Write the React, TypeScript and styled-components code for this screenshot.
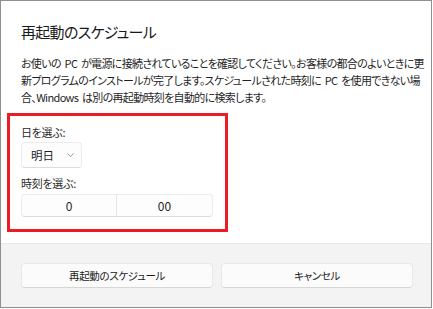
import React from 'react'
import styled, { createGlobalStyle } from 'styled-components'

const GlobalStyle = createGlobalStyle`
  html, body {
    margin: 0;
    padding: 0;
    background: #ffffff;
  }
  body {
    font-family: "Noto Sans CJK JP", "Noto Sans", sans-serif;
    font-feature-settings: "palt";
    color: #1b1b1b;
  }
`

const Window = styled.div`
  width: 432px;
  height: 308px;
  box-sizing: border-box;
  border: 1px solid #8f8f8f;
  background: #ffffff;
  display: flex;
  flex-direction: column;
`

const Content = styled.div`
  flex: 1;
  padding: 19px 20px 0 20px;
  display: flex;
  flex-direction: column;
`

const Title = styled.h1`
  margin: 0;
  font-size: 15px;
  letter-spacing: -0.7px;
  line-height: 24px;
  font-weight: 400;
  color: #1a1a1a;
  white-space: nowrap;
`

const Body = styled.p`
  margin: 11px 0 0 0;
  font-size: 11px;
  letter-spacing: -0.68px;
  word-spacing: 2px;
  line-height: 17px;
  color: #1f1f1f;
  white-space: nowrap;
`

const Highlight = styled.section`
  margin: 7px 0 0 -14px;
  width: 221px;
  height: 119px;
  box-sizing: border-box;
  border: 3px solid #ed1c24;
  padding: 8px 0 0 11px;
  display: flex;
  flex-direction: column;
  align-items: flex-start;
`

const Label = styled.div<{ $gap?: number }>`
  font-size: 11px;
  letter-spacing: -0.3px;
  line-height: 17px;
  color: #2b2b2b;
  margin-top: ${p => p.$gap ?? 0}px;
`

const Dropdown = styled.div`
  margin-top: 1px;
  width: 61px;
  height: 26px;
  box-sizing: border-box;
  border: 1px solid #ececec;
  border-bottom-color: #dcdcdc;
  border-radius: 4px;
  background: #fdfdfd;
  display: flex;
  align-items: center;
  padding: 0 0 0 9px;
  gap: 13px;
  font-size: 11.5px;
  color: #1f1f1f;
`

const TimePicker = styled.div`
  margin-top: 2px;
  width: 192px;
  height: 23px;
  box-sizing: border-box;
  border: 1px solid #ececec;
  border-bottom-color: #dcdcdc;
  border-radius: 4px;
  background: #fdfdfd;
  display: grid;
  grid-template-columns: 1fr 1fr;
`

const TimeCell = styled.div<{ $first?: boolean }>`
  display: flex;
  align-items: center;
  justify-content: center;
  font-size: 12px;
  color: #1f1f1f;
  border-right: ${p => (p.$first ? '1px solid #e6e6e6' : 'none')};
`

const Footer = styled.div`
  height: 64px;
  box-sizing: border-box;
  background: #f3f3f3;
  border-top: 1px solid #e8e8e8;
  padding: 19px 19px 0 20px;
  display: grid;
  grid-template-columns: 192px 192px;
  column-gap: 8px;
  align-items: start;
`

const Button = styled.button`
  height: 25px;
  box-sizing: border-box;
  border: 1px solid #e8e8e8;
  border-bottom-color: #d6d6d6;
  border-radius: 4px;
  background: #fbfbfb;
  font-family: inherit;
  font-feature-settings: "palt";
  font-size: 10.5px;
  letter-spacing: -0.35px;
  color: #1b1b1b;
  padding: 0;
  cursor: pointer;
`

const Chevron = () => (
  <svg width="7" height="4" viewBox="0 0 7 4">
    <path d="M0.5 0.5 L3.5 3.5 L6.5 0.5" fill="none" stroke="#7a7a7a" strokeWidth="0.8" />
  </svg>
)

export default function App() {
  return (
    <>
      <GlobalStyle />
      <Window>
        <Content>
          <Title>再起動のスケジュール</Title>
          <Body>
            お使いの PC が電源に接続されていることを確認してください。お客様の都合のよいときに更
            <br />
            新プログラムのインストールが完了します。スケジュールされた時刻に PC を使用できない場
            <br />
            合、Windows は別の再起動時刻を自動的に検索します。
          </Body>
          <Highlight>
            <Label>日を選ぶ:</Label>
            <Dropdown>
              <span>明日</span>
              <Chevron />
            </Dropdown>
            <Label $gap={7}>時刻を選ぶ:</Label>
            <TimePicker>
              <TimeCell $first>0</TimeCell>
              <TimeCell>00</TimeCell>
            </TimePicker>
          </Highlight>
        </Content>
        <Footer>
          <Button>再起動のスケジュール</Button>
          <Button>キャンセル</Button>
        </Footer>
      </Window>
    </>
  )
}
